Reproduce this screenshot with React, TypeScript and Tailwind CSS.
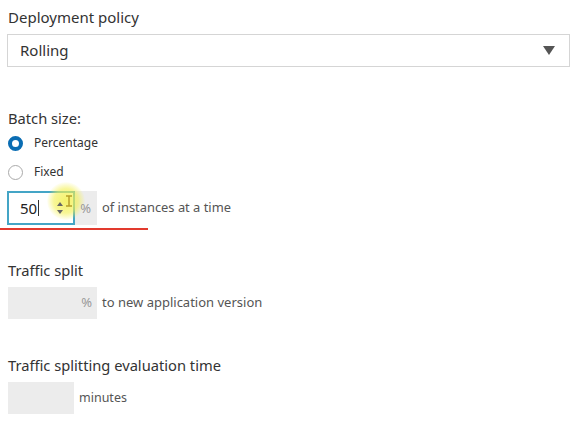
import React from "react";

export default function App() {
  return (
    <div className="w-[575px] h-[422px] bg-white overflow-hidden relative" style={{ fontFamily: '"Noto Sans", "Open Sans", sans-serif' }}>
      <div className="pl-[8px] pr-[5px] pt-[6px]">
        <div className="text-[15px] leading-[22px] text-[#333]">Deployment policy</div>
        <div className="mt-[6px] ml-[-1px] h-[33px] border border-[#d5d5d5] flex items-center justify-between pl-[12px] pr-[14px]">
          <span className="text-[15px] text-[#333]">Rolling</span>
          <svg width="12" height="9" viewBox="0 0 12 9"><path d="M0 0 L12 0 L6 9 Z" fill="#555" /></svg>
        </div>

        <div className="mt-[41px] text-[14.7px] leading-[20px] text-[#333]">Batch size:</div>
        <div className="mt-[5px] flex items-center gap-[11px] h-[20px]">
          <span className="w-[15px] h-[15px] rounded-full border-[4px] border-[#0a6db3] bg-white box-border" />
          <span className="text-[12px] text-[#333]">Percentage</span>
        </div>
        <div className="mt-[9px] flex items-center gap-[11px] h-[20px]">
          <span className="w-[15px] h-[15px] rounded-full border border-[#aaa] bg-white box-border" />
          <span className="text-[12px] text-[#333]">Fixed</span>
        </div>
        <div className="mt-[9px] flex items-center">
          <div className="relative w-[90px] h-[34px] bg-[#ececec] ml-[-1px]">
            <div className="absolute left-0 top-0 w-[68px] h-[34px] border-2 border-[#44a5c6] bg-white flex items-center pl-[11px]">
              <span className="text-[15px] text-[#222]">50</span>
              <span className="w-[1px] h-[16px] bg-[#333] ml-[1px]" />
            </div>
            <div className="absolute left-[40px] top-[-9px] w-[38px] h-[38px] rounded-full bg-[radial-gradient(circle,rgba(243,240,80,0.85)_0%,rgba(243,240,80,0.6)_45%,rgba(243,240,80,0)_72%)]" />
            <svg className="absolute left-[50px] top-[10px]" width="6" height="14" viewBox="0 0 6 14"><path d="M0 5 L3 1 L6 5 Z M0 9 L3 13 L6 9 Z" fill="#666" /></svg>
            <svg className="absolute left-[58px] top-[4px]" width="8" height="14" viewBox="0 0 8 14"><path d="M1 1 H7 M4 1 V11 M1 11 H7" stroke="#b8a02a" strokeWidth="1.5" fill="none" /></svg>
            <span className="absolute right-[6px] top-[8px] text-[13px] text-[#999]">%</span>
          </div>
          <span className="ml-[5px] text-[12.9px] text-[#555]">of instances at a time</span>
        </div>
        <div className="ml-[-8px] mt-[3px] w-[148px] h-[2px] bg-[#e23a2e]" />

        <div className="mt-[30px] text-[14.7px] leading-[20px] text-[#333]">Traffic split</div>
        <div className="mt-[7px] flex items-center">
          <div className="w-[89px] h-[32px] bg-[#ececec] flex items-center justify-end pr-[5px]">
            <span className="text-[13px] text-[#999]">%</span>
          </div>
          <span className="ml-[5px] text-[13px] text-[#555]">to new application version</span>
        </div>

        <div className="mt-[36px] text-[14.7px] leading-[20px] text-[#333]">Traffic splitting evaluation time</div>
        <div className="mt-[7px] flex items-center">
          <div className="w-[66px] h-[32px] bg-[#ececec]" />
          <span className="ml-[5px] text-[12.5px] text-[#555]">minutes</span>
        </div>
      </div>
    </div>
  );
}
